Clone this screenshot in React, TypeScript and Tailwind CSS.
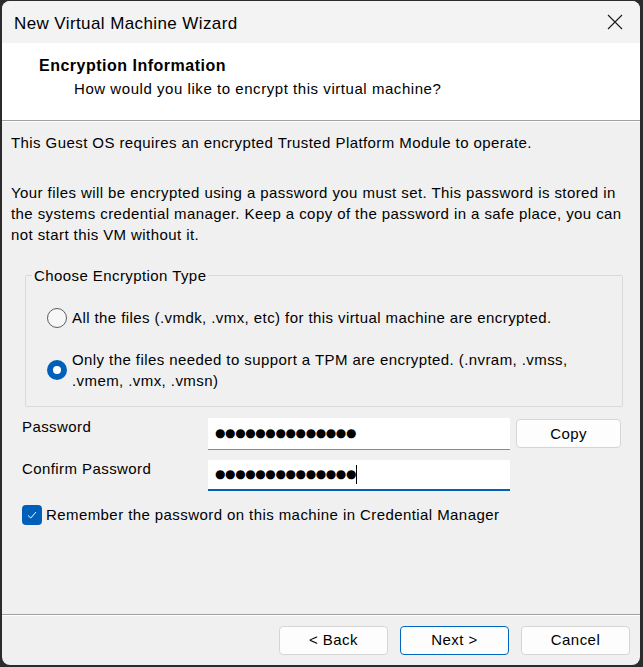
import { useState } from 'react';

const font = { fontFamily: '"Liberation Sans", Arial, sans-serif' };
const dotFont = { fontFamily: '"DejaVu Sans", sans-serif' };

function Radio({ checked }: { checked: boolean }) {
  if (checked) {
    return (
      <span className="w-[20px] h-[20px] shrink-0 rounded-full bg-[#005fb8] flex items-center justify-center">
        <span className="w-[8px] h-[8px] rounded-full bg-white" />
      </span>
    );
  }
  return <span className="w-[20px] h-[20px] shrink-0 rounded-full border border-[#5d5d5d] bg-[#f7f7f7]" />;
}

function WizardButton({ label, primary }: { label: string; primary?: boolean }) {
  return (
    <button
      className={
        'w-[109px] h-[29px] rounded-[4px] bg-[#fdfdfd] text-[15px] tracking-[0.45px] text-black ' +
        (primary ? 'border border-[#0067c0]' : 'border border-[#d5d5d5]')
      }
    >
      {label}
    </button>
  );
}

export default function App() {
  const [mode, setMode] = useState<'all' | 'tpm'>('tpm');
  const [remember, setRemember] = useState(true);
  const dots = '●●●●●●●●●●●●●●';

  return (
    <div className="w-[643px] h-[667px] bg-[#2b2b2b] pl-[2px] pr-[3px] pt-[1px] pb-[2px]" style={font}>
      <div className="h-full flex flex-col rounded-[8px] overflow-hidden bg-[#f0f0f0] text-black">
        {/* Title bar */}
        <div className="h-[42px] shrink-0 bg-[#f3f3f3] flex items-center justify-between pl-[12px] pr-[17px]">
          <span className="text-[17px] leading-none tracking-[0.4px] pt-[2px]">New Virtual Machine Wizard</span>
          <svg width="16" height="16" viewBox="0 0 16 16" className="text-[#1a1a1a]">
            <path d="M1 1 L15 15 M15 1 L1 15" stroke="currentColor" strokeWidth="1.1" fill="none" />
          </svg>
        </div>

        {/* Header */}
        <div className="h-[78px] shrink-0 bg-white border-b border-[#a0a0a0] pt-[12px]">
          <div className="pl-[37px] text-[16px] leading-[21px] font-bold tracking-[0.5px]">Encryption Information</div>
          <div className="pl-[72px] mt-[2px] text-[15px] leading-[21px] tracking-[0.55px]">
            How would you like to encrypt this virtual machine?
          </div>
        </div>

        {/* Body */}
        <div className="flex-1 border-t border-white px-[9px] pt-[10px] text-[15px] leading-[21px] tracking-[0.42px]">
          <p>This Guest OS requires an encrypted Trusted Platform Module to operate.</p>
          <p className="mt-[29px]">
            Your files will be encrypted using a password you must set. This password is stored in the systems
            credential manager. Keep a copy of the password in a safe place, you can not start this VM without it.
          </p>

          <fieldset className="mt-[20px] ml-[14px] mr-[8px] border border-[#dadada] rounded-[2px] pb-[15px]">
            <legend className="ml-[6px] px-[2px]">Choose Encryption Type</legend>
            <label className="mt-[21px] flex items-center gap-[5px] pl-[21px]" onClick={() => setMode('all')}>
              <Radio checked={mode === 'all'} />
              <span>All the files (.vmdk, .vmx, etc) for this virtual machine are encrypted.</span>
            </label>
            <label className="mt-[21px] flex items-center gap-[5px] pl-[21px] pr-[20px]" onClick={() => setMode('tpm')}>
              <Radio checked={mode === 'tpm'} />
              <span>Only the files needed to support a TPM are encrypted. (.nvram, .vmss, .vmem, .vmx, .vmsn)</span>
            </label>
          </fieldset>

          {/* Password fields */}
          <div className="mt-[11px] flex items-start pl-[11px]">
            <span className="w-[186px] -mt-[2px]">Password</span>
            <div className="w-[302px] h-[32px] bg-white border-b border-[#8a8a8a] flex items-center pl-[7px]">
              <span className="text-[12px] tracking-[-0.4px]" style={dotFont}>{dots}</span>
            </div>
            <button className="ml-[6px] mt-[1px] w-[105px] h-[29px] rounded-[4px] bg-[#fdfdfd] border border-[#d5d5d5]">
              Copy
            </button>
          </div>
          <div className="mt-[10px] flex items-start pl-[11px]">
            <span className="w-[186px] -mt-[2px]">Confirm Password</span>
            <div className="w-[302px] h-[31px] bg-white border-b-2 border-[#005fb8] flex items-center pl-[7px]">
              <span className="text-[12px] tracking-[-0.4px]" style={dotFont}>{dots}</span>
              <span className="w-px h-[19px] bg-black" />
            </div>
          </div>

          <label className="mt-[13px] flex items-center gap-[4px] pl-[11px]" onClick={() => setRemember(!remember)}>
            <span className="w-[20px] h-[20px] rounded-[4px] bg-[#005fb8] flex items-center justify-center">
              {remember && (
                <svg width="12" height="12" viewBox="0 0 12 12">
                  <path d="M2 6.5 L4.8 9 L10 3" stroke="white" strokeWidth="1" fill="none" />
                </svg>
              )}
            </span>
            <span>Remember the password on this machine in Credential Manager</span>
          </label>
        </div>

        {/* Footer */}
        <div className="h-[51px] shrink-0 border-t border-[#a0a0a0]">
          <div className="h-full border-t border-white flex justify-end gap-[12px] pr-[10px] pt-[10px]">
            <WizardButton label="< Back" />
            <WizardButton label="Next >" primary />
            <WizardButton label="Cancel" />
          </div>
        </div>
      </div>
    </div>
  );
}
